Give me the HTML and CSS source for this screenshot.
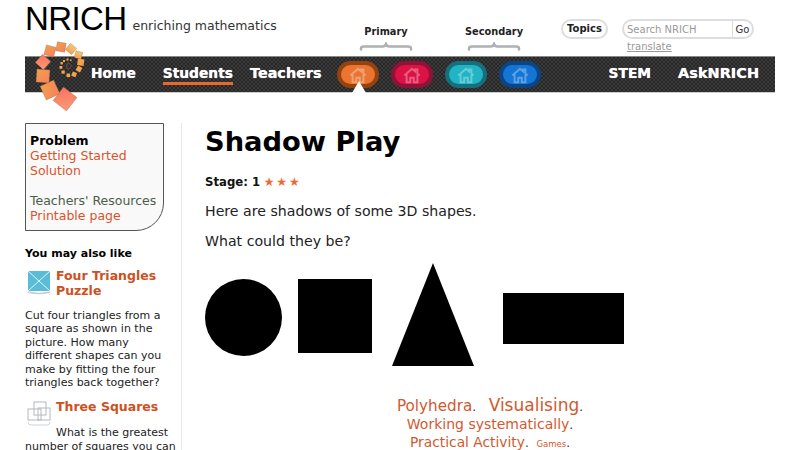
FILE: index.html
```html
<!DOCTYPE html>
<html lang="en">
<head>
<meta charset="utf-8">
<title>Shadow Play - NRICH</title>
<link rel="stylesheet" href="styles.css">
</head>
<body>
<div class="page">
  <header class="top">
    <div class="brand"><span class="brand-name">NRICH</span><span class="brand-tag">enriching mathematics</span></div>
    <div class="group group-primary">
      <span class="group-label">Primary</span>
      <svg class="brace" viewBox="0 0 54 9"><path d="M2 7.500V6.500Q2 4.500 5 4.500H24Q26 4.500 27 2Q28 4.500 30 4.500H49Q52 4.500 52 6.500V7.500"/></svg>
    </div>
    <div class="group group-secondary">
      <span class="group-label">Secondary</span>
      <svg class="brace" viewBox="0 0 54 9"><path d="M2 7.500V6.500Q2 4.500 5 4.500H24Q26 4.500 27 2Q28 4.500 30 4.500H49Q52 4.500 52 6.500V7.500"/></svg>
    </div>
    <div class="topics">Topics</div>
    <div class="search-wrap">
      <div class="search"><span class="search-input">Search NRICH</span><span class="search-go">Go</span></div>
      <span class="translate">translate</span>
    </div>
  </header>

  <nav class="nav">
    <span class="nav-link nav-home">Home</span>
    <span class="nav-link nav-students">Students</span>
    <span class="nav-link nav-teachers">Teachers</span>
    <div class="pills">
      <span class="pill pill-orange"><svg class="house" viewBox="0 0 20 20"><path d="M1.500 10.500L10 3L13.500 6V4H16V8.200L18.500 10.500M4 9.500V18H8V13H12V18H16V9.500"/></svg></span>
      <span class="pill pill-red"><svg class="house" viewBox="0 0 20 20"><path d="M1.500 10.500L10 3L13.500 6V4H16V8.200L18.500 10.500M4 9.500V18H8V13H12V18H16V9.500"/></svg></span>
      <span class="pill pill-teal"><svg class="house" viewBox="0 0 20 20"><path d="M1.500 10.500L10 3L13.500 6V4H16V8.200L18.500 10.500M4 9.500V18H8V13H12V18H16V9.500"/></svg></span>
      <span class="pill pill-blue"><svg class="house" viewBox="0 0 20 20"><path d="M1.500 10.500L10 3L13.500 6V4H16V8.200L18.500 10.500M4 9.500V18H8V13H12V18H16V9.500"/></svg></span>
    </div>
    <span class="nav-link nav-stem">STEM</span>
    <span class="nav-link nav-ask">AskNRICH</span>
    <span class="nav-pointer"></span>
    <svg class="logo" viewBox="30 40 60 75">
      <defs>
        <linearGradient id="tile" x1="0" y1="0" x2="1" y2="1">
          <stop offset="0" stop-color="#f2a04c"/>
          <stop offset="1" stop-color="#f8805c"/>
        </linearGradient>
        <linearGradient id="tile2" x1="0" y1="0" x2="1" y2="1">
          <stop offset="0" stop-color="#f8735c"/>
          <stop offset="1" stop-color="#fa9a78"/>
        </linearGradient>
        <linearGradient id="tile3" x1="0" y1="0" x2="0" y2="1">
          <stop offset="0" stop-color="#f0c878"/>
          <stop offset="1" stop-color="#f6a24c"/>
        </linearGradient>
      </defs>
      <g class="logo-tiles">
        <rect x="-8.500" y="-8.500" width="17" height="17" fill="url(#tile2)" transform="translate(65 99) rotate(38)"/>
        <rect x="-7.500" y="-7.500" width="15" height="15" fill="url(#tile)" transform="translate(50 90) rotate(-25)"/>
        <rect x="-6.500" y="-6.500" width="13" height="13" fill="url(#tile)" transform="translate(43 76) rotate(4)"/>
        <rect x="-5.500" y="-5.500" width="11" height="11" fill="url(#tile2)" transform="translate(43 62) rotate(42)"/>
        <rect x="-5" y="-5" width="10" height="10" fill="url(#tile)" transform="translate(50 51) rotate(15)"/>
        <rect x="-4.500" y="-4.500" width="9" height="9" fill="url(#tile)" transform="translate(61 47) rotate(10)"/>
        <rect x="-4" y="-4" width="8" height="8" fill="url(#tile3)" transform="translate(71 49) rotate(40)"/>
        <rect x="-3.500" y="-3.500" width="7" height="7" fill="url(#tile3)" transform="translate(78.500 55) rotate(15)"/>
      </g>
      <g fill="#f6a24c">
        <rect x="77.500" y="59" width="6.500" height="6.500" transform="rotate(8 81 62)"/>
        <rect x="76.500" y="66.500" width="5" height="5" transform="rotate(30 79 69)"/>
        <rect x="72" y="72" width="4.500" height="4.500" transform="rotate(20 74 74)"/>
        <rect x="66.500" y="73.500" width="3.600" height="3.600"/>
        <rect x="61.500" y="70.500" width="3.200" height="3.200"/>
        <rect x="59.500" y="66" width="2.800" height="2.800"/>
        <rect x="60.500" y="62" width="2.400" height="2.400"/>
        <rect x="63" y="60" width="2" height="2"/>
        <rect x="66.500" y="58.500" width="2" height="2"/>
        <rect x="70" y="59.500" width="1.600" height="1.600"/>
      </g>
      <path class="logo-swirl" d="M72 66Q70 62 67 64Q65 67 68 69Q71 69 71 66"/>
    </svg>
  </nav>

  <div class="content">
    <aside class="side">
      <div class="menu">
        <strong class="menu-current">Problem</strong>
        <span class="menu-link">Getting Started</span>
        <span class="menu-link menu-gap">Solution</span>
        <span class="menu-teach">Teachers' Resources</span>
        <span class="menu-link">Printable page</span>
      </div>
      <h3 class="also">You may also like</h3>
      <div class="rel-head">
        <svg class="rel-icon" viewBox="0 0 24 25">
          <rect x="1" y="1" width="22" height="20" fill="#5bbcd8"/>
          <path d="M1 1L23 21M23 1L1 21" stroke="#dff3f8" stroke-width="1" fill="none"/>
          <path d="M1 22Q12 25 23 22" stroke="#c8ccce" stroke-width="1.500" fill="none"/>
        </svg>
        <span class="rel-title">Four Triangles Puzzle</span>
      </div>
      <p class="rel-text">Cut four triangles from a square as shown in the picture. How many different shapes can you make by fitting the four triangles back together?</p>
      <div class="rel-head rel-head-2">
        <svg class="rel-icon" viewBox="0 0 24 25">
          <g fill="none" stroke="#b4b8ba" stroke-width="1">
            <rect x="1" y="8" width="13" height="11"/>
            <rect x="7" y="1" width="12" height="13"/>
            <rect x="11" y="7" width="12" height="12"/>
            <path d="M1 21Q1 24 4 24H20Q23 24 23 21" stroke="#d0d3d5"/>
          </g>
        </svg>
        <span class="rel-title">Three Squares</span>
      </div>
      <p class="rel-text rel-indent">What is the greatest number of squares you can</p>
    </aside>

    <main class="main">
      <h1 class="title">Shadow Play</h1>
      <p class="stage"><strong>Stage: 1</strong> <span class="stars">★ ★ ★</span></p>
      <p class="para">Here are shadows of some 3D shapes.</p>
      <p class="para">What could they be?</p>
      <svg class="shapes" viewBox="205 263 420 104">
        <circle cx="243.500" cy="317.500" r="38.500"/>
        <rect x="298" y="279" width="74" height="74"/>
        <polygon points="433,263 474,366 392,366"/>
        <rect x="503" y="293" width="121" height="51"/>
      </svg>
      <div class="tags">
        <div class="tag-line"><span class="tag t16">Polyhedra</span>. &nbsp;<span class="tag t18">Visualising</span>.</div>
        <div class="tag-line"><span class="tag t14">Working systematically</span>.</div>
        <div class="tag-line"><span class="tag t14b">Practical Activity</span>. &nbsp;<span class="tag t9">Games</span>.</div>
      </div>
    </main>
  </div>
</div>
</body>
</html>
```

FILE: styles.css
```css
html, body {
  margin: 0;
  padding: 0;
  height: 450px;
  overflow: hidden;
  background: #fff;
}

body {
  font-family: "DejaVu Sans", Verdana, sans-serif;
  color: #111;
}

.page {
  width: 750px;
  padding: 0 25px;
}

.top {
  display: flex;
  align-items: flex-start;
  height: 56px;
}

.brand {
  display: flex;
  align-items: baseline;
  width: 334px;
  height: 56px;
  flex: none;
}

.brand-name {
  font-family: "Liberation Sans", Arial, sans-serif;
  font-size: 33px;
  line-height: 38px;
  letter-spacing: -0.6px;
  color: #000;
}

.brand-tag {
  margin-left: 6px;
  font-size: 12.500px;
  color: #333;
}

.group {
  display: flex;
  flex-direction: column;
  align-items: center;
  width: 54px;
  flex: none;
  padding-top: 26px;
}

.group-secondary {
  margin-left: 54px;
}

.group-label {
  font-size: 9.800px;
  line-height: 12px;
  font-weight: 700;
  white-space: nowrap;
  color: #222;
}

.brace {
  display: block;
  width: 54px;
  height: 9px;
  margin-top: 4px;
}

.brace path {
  fill: none;
  stroke: #aeb0b3;
  stroke-width: 2.500;
  stroke-linecap: round;
}

.topics {
  flex: none;
  margin: 19px 0 0 40px;
  box-sizing: border-box;
  width: 47px;
  height: 20px;
  border: 2px solid #ddd;
  border-radius: 10px;
  font-size: 10px;
  line-height: 16px;
  font-weight: 700;
  text-align: center;
  color: #222;
}

.search-wrap {
  flex: none;
  margin: 19px 0 0 14px;
}

.search {
  display: flex;
  box-sizing: border-box;
  width: 132px;
  height: 20px;
  border: 2px solid #ddd;
  border-radius: 10px;
  font-size: 10px;
  line-height: 17px;
}

.search-input {
  box-sizing: border-box;
  width: 109px;
  padding-left: 3px;
  border-right: 1px solid #ddd;
  color: #999;
}

.search-go {
  flex: 1;
  text-align: center;
  color: #333;
}

.translate {
  display: block;
  margin: 2px 0 0 5px;
  font-size: 10px;
  line-height: 12px;
  color: #999;
  text-decoration: underline;
}

.nav {
  position: relative;
  box-sizing: border-box;
  display: flex;
  align-items: center;
  height: 37px;
  border-top: 1px solid #888;
  border-bottom: 1px solid #ccc;
  background-color: #2f2f2f;
  background-image: repeating-conic-gradient(#3c3c3c 0 25%, #262626 0 50%);
  background-size: 4px 4px;
}

.nav-link {
  flex: none;
  margin-bottom: 3px;
  font-size: 13.800px;
  line-height: 20px;
  font-weight: 700;
  color: #fff;
  text-shadow: 0 0 1px #fff, 0 0 2px rgba(0, 0, 0, 0.8);
}

.nav-home {
  margin-left: 66px;
}

.nav-students {
  margin-left: 27px;
  margin-bottom: 0;
  line-height: 18px;
  padding-bottom: 0;
  border-bottom: 3px solid #e8692c;
}

.nav-teachers {
  margin-left: 17px;
  font-size: 14.400px;
}

.pills {
  display: flex;
  gap: 12px;
  margin-left: 15.500px;
  flex: none;
}

.pill {
  box-sizing: border-box;
  display: flex;
  align-items: center;
  justify-content: center;
  width: 42px;
  height: 27px;
  border: 4px solid;
  border-radius: 14px;
}

.pill-orange { background: #ea7430; border-color: #94430f; }
.pill-red { background: #dc1245; border-color: #8f1238; }
.pill-teal { background: #20b4c4; border-color: #156f7c; }
.pill-blue { background: #1375d6; border-color: #0b4583; }

.house {
  width: 18px;
  height: 18px;
}

.house path {
  fill: none;
  stroke: rgba(255, 255, 255, 0.32);
  stroke-width: 2.200;
}

.nav-stem {
  margin-left: 67.500px;
}

.nav-ask {
  margin-left: 27px;
  font-size: 14.500px;
}

.nav-pointer {
  position: absolute;
  left: 327px;
  bottom: -1px;
  width: 0;
  height: 0;
  border-left: 7px solid transparent;
  border-right: 7px solid transparent;
  border-bottom: 12px solid #fff;
}

.logo {
  position: absolute;
  left: 5px;
  top: -17px;
  width: 60px;
  height: 75px;
}

.logo-tiles rect {
  stroke: rgba(120, 90, 70, 0.45);
  stroke-width: 0.6;
}

.logo-swirl {
  fill: none;
  stroke: #6b5040;
  stroke-width: 1;
}

.content {
  display: flex;
  margin-top: 30px;
}

.side {
  box-sizing: border-box;
  flex: none;
  width: 157px;
  padding-right: 17px;
  border-right: 1px solid #e8e8e8;
  height: 330px;
}

.menu {
  box-sizing: border-box;
  width: 139px;
  height: 108px;
  padding: 9px 4px 0;
  border: 1px solid #555;
  border-bottom-right-radius: 28px;
  background: #f9f9f9;
  font-size: 12.500px;
  line-height: 15px;
}

.menu-current,
.menu-link,
.menu-teach {
  display: block;
  white-space: nowrap;
}

.menu-current { color: #000; }
.menu-link { color: #d9532a; }
.menu-gap { margin-bottom: 15px; }
.menu-teach { color: #4d5c4a; }

.also {
  margin: 16px 0 0;
  font-size: 11px;
  line-height: 14px;
  font-weight: 700;
  color: #000;
}

.rel-head {
  display: flex;
  align-items: flex-start;
  margin-top: 7px;
}

.rel-head-2 {
  margin-top: 10px;
}

.rel-icon {
  flex: none;
  width: 24px;
  height: 25px;
  margin: 2px 5px 0 2px;
}

.rel-title {
  font-size: 12.500px;
  line-height: 15px;
  font-weight: 700;
  color: #cf4f20;
}

.rel-text {
  margin: 11px -14px 0 0;
  font-size: 11px;
  line-height: 13.400px;
  color: #222;
}

.rel-indent {
  margin-top: 0;
  text-indent: 31px;
}

.main {
  flex: 1;
  padding-left: 23px;
}

.title {
  margin: 1px 0 0;
  font-size: 27.300px;
  line-height: 36px;
  font-weight: 700;
  color: #000;
}

.stage {
  margin: 14px 0 0;
  font-size: 11.700px;
  line-height: 16px;
  color: #111;
}

.stars {
  color: #ee6a33;
  font-size: 12px;
  word-spacing: -2px;
}

.para {
  margin: 13px 0 0;
  font-size: 14.150px;
  line-height: 17px;
  color: #222;
}

.shapes {
  display: block;
  width: 420px;
  height: 104px;
  margin-top: 13px;
}

.tags {
  margin-top: 29px;
  text-align: center;
  font-size: 12px;
  color: #333;
}

.tag-line {
  height: 18.500px;
  line-height: 18.500px;
  white-space: nowrap;
}

.tag {
  color: #d2592e;
}

.t9 { font-size: 8.500px; }
.t14 { font-size: 14px; }
.t14b { font-size: 13.800px; }
.t16 { font-size: 15.200px; }
.t18 {
  font-size: 17px;
  margin-left: 5px;
}
```
